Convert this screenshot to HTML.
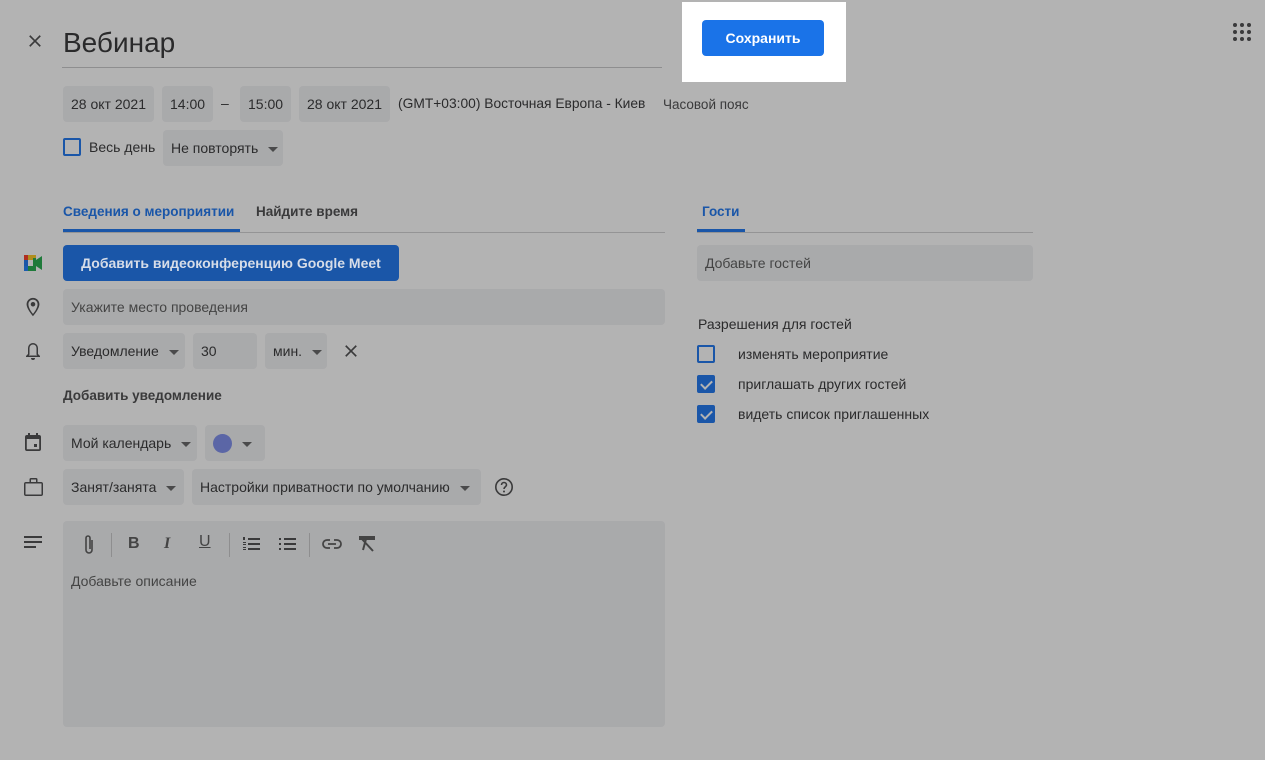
<!DOCTYPE html>
<html><head><meta charset="utf-8"><style>
*{margin:0;padding:0;box-sizing:border-box}
body{width:1265px;height:760px;background:#b3b3b3;font-family:"Liberation Sans",Arial,sans-serif;color:#2b2b2c;position:relative;overflow:hidden;font-size:14px}
.a{position:absolute}
.f{position:absolute;background:#a9aaab;border-radius:4px;display:flex;align-items:center;padding-left:8px;font-size:14px;color:#2b2b2c}
.dd::after{content:"";border:5px solid transparent;border-top-color:#4a4a4b;border-bottom:0;margin-left:10px;margin-top:2px}
.cb{position:absolute;width:18px;height:18px;border:2px solid #1a56a8;border-radius:2px}
.cbx{background:#1a56a8}
.cbx::after{content:"";position:absolute;left:4px;top:1px;width:5px;height:9px;border:solid #b3b3b3;border-width:0 2px 2px 0;transform:rotate(45deg)}
.ic{position:absolute;fill:#3a3a3b}
</style></head><body>
<svg class="ic" style="left:25px;top:31px" width="20" height="20" viewBox="0 0 24 24"><path d="M19 6.4L17.6 5 12 10.6 6.4 5 5 6.4 10.6 12 5 17.6 6.4 19 12 13.4 17.6 19 19 17.6 13.4 12z"/></svg>
<div class="a" style="left:63px;top:27px;font-size:28px;color:#2a2a2b">Вебинар</div>
<div class="a" style="left:62px;top:67px;width:600px;height:1px;background:#8e8e8f"></div>
<div class="a" style="left:682px;top:2px;width:164px;height:80px;background:#fff"></div>
<div class="a" style="left:702px;top:20px;width:122px;height:36px;background:#1a73e8;border-radius:4px;color:#fff;font-weight:bold;font-size:14px;text-align:center;line-height:36px">Сохранить</div>
<svg class="ic" style="left:1232px;top:22px" width="20" height="20" viewBox="0 0 20 20"><g fill="#3a3a3b"><circle cx="3" cy="3" r="2"/><circle cx="10" cy="3" r="2"/><circle cx="17" cy="3" r="2"/><circle cx="3" cy="10" r="2"/><circle cx="10" cy="10" r="2"/><circle cx="17" cy="10" r="2"/><circle cx="3" cy="17" r="2"/><circle cx="10" cy="17" r="2"/><circle cx="17" cy="17" r="2"/></g></svg>

<div class="f" style="left:63px;top:86px;width:91px;height:36px">28 окт 2021</div>
<div class="f" style="left:162px;top:86px;width:51px;height:36px">14:00</div>
<div class="a" style="left:221px;top:95px">–</div>
<div class="f" style="left:240px;top:86px;width:51px;height:36px">15:00</div>
<div class="f" style="left:299px;top:86px;width:91px;height:36px">28 окт 2021</div>
<div class="a" style="left:398px;top:96px;font-size:13.8px">(GMT+03:00) Восточная Европа - Киев</div>
<div class="a" style="left:663px;top:97px;font-size:13.5px;color:#3a3a3b">Часовой пояс</div>

<div class="cb" style="left:63px;top:138px"></div>
<div class="a" style="left:89px;top:139px">Весь день</div>
<div class="f dd" style="left:163px;top:130px;width:120px;height:36px">Не повторять</div>

<div class="a" style="left:63px;top:204px;color:#1a56a8;font-weight:bold;font-size:13.5px">Сведения о мероприятии</div>
<div class="a" style="left:256px;top:204px;color:#3a3a3b;font-weight:bold;font-size:13.5px">Найдите время</div>
<div class="a" style="left:63px;top:232px;width:602px;height:1px;background:#949495"></div>
<div class="a" style="left:63px;top:229px;width:177px;height:3px;background:#1a56a8"></div>

<div class="a" style="left:702px;top:204px;color:#1a56a8;font-weight:bold;font-size:13.5px">Гости</div>
<div class="a" style="left:697px;top:232px;width:336px;height:1px;background:#949495"></div>
<div class="a" style="left:697px;top:229px;width:48px;height:3px;background:#1a56a8"></div>
<div class="f" style="left:697px;top:245px;width:336px;height:36px;color:#444">Добавьте гостей</div>
<div class="a" style="left:698px;top:316px">Разрешения для гостей</div>
<div class="cb" style="left:697px;top:345px"></div><div class="a" style="left:738px;top:346px">изменять мероприятие</div>
<div class="cb cbx" style="left:697px;top:375px"></div><div class="a" style="left:738px;top:376px">приглашать других гостей</div>
<div class="cb cbx" style="left:697px;top:405px"></div><div class="a" style="left:738px;top:406px">видеть список приглашенных</div>

<svg class="a" style="left:24px;top:255px" width="19" height="16" viewBox="0 0 19 16"><rect x="0" y="0" width="12" height="5" fill="#b08e1e"/><rect x="0" y="0" width="4" height="5" fill="#b02e20"/><rect x="0" y="5" width="4" height="6" fill="#1a56a8"/><rect x="0" y="11" width="12" height="5" fill="#1f7a3a"/><rect x="0" y="11" width="4" height="5" fill="#1a5cae"/><rect x="9" y="3" width="3" height="10" fill="#1f7a3a"/><path d="M12 5l6-4v14l-6-4z" fill="#1f7a3a"/></svg>
<div class="a" style="left:63px;top:245px;width:336px;height:36px;background:#1a56a8;border-radius:4px;color:#d7dde8;font-weight:bold;font-size:14px;text-align:center;line-height:36px">Добавить видеоконференцию Google Meet</div>

<svg class="ic" style="left:22px;top:296px" width="22" height="22" viewBox="0 0 24 24"><path d="M12 2C8.1 2 5 5.1 5 9c0 5.2 7 13 7 13s7-7.8 7-13c0-3.9-3.1-7-7-7zm0 17.5C9.9 17 7 12.7 7 9c0-2.8 2.2-5 5-5s5 2.2 5 5c0 3.6-2.9 8-5 10.5zM12 6.5a2.5 2.5 0 100 5 2.5 2.5 0 000-5z"/></svg>
<div class="f" style="left:63px;top:289px;width:602px;height:36px;color:#444">Укажите место проведения</div>

<svg class="ic" style="left:24px;top:341px" width="18" height="20" viewBox="0 0 18 20"><path d="M9 2a5 5 0 015 5v6l2 2v1H2v-1l2-2V7a5 5 0 015-5zm0 1.5A3.5 3.5 0 005.5 7v6.6L4.8 14.5h8.4l-.7-.9V7A3.5 3.5 0 009 3.5zM7 17h4a2 2 0 01-4 0z"/></svg>
<div class="f dd" style="left:63px;top:333px;width:122px;height:36px">Уведомление</div>
<div class="f" style="left:193px;top:333px;width:64px;height:36px">30</div>
<div class="f dd" style="left:265px;top:333px;width:62px;height:36px">мин.</div>
<svg class="ic" style="left:341px;top:341px" width="20" height="20" viewBox="0 0 24 24"><path d="M19 6.4L17.6 5 12 10.6 6.4 5 5 6.4 10.6 12 5 17.6 6.4 19 12 13.4 17.6 19 19 17.6 13.4 12z"/></svg>
<div class="a" style="left:63px;top:388px;font-weight:bold;font-size:13.5px;color:#3a3a3b">Добавить уведомление</div>

<svg class="ic" style="left:25px;top:433px" width="16" height="18" viewBox="0 0 16 18"><path d="M3 0h2v2h6V0h2v2h1a2 2 0 012 2v12a2 2 0 01-2 2H2a2 2 0 01-2-2V4a2 2 0 012-2h1zM1.8 6v10.2h12.4V6zm7.2 5h3v3H9z"/></svg>
<div class="f dd" style="left:63px;top:425px;width:134px;height:36px">Мой календарь</div>
<div class="f dd" style="left:205px;top:425px;width:60px;height:36px"><span style="width:19px;height:19px;border-radius:50%;background:#5b66a6;display:inline-block"></span></div>

<svg class="ic" style="left:24px;top:478px" width="19" height="18" viewBox="0 0 19 18"><path d="M7 0h5a1.5 1.5 0 011.5 1.5V4H17a2 2 0 012 2v10a2 2 0 01-2 2H2a2 2 0 01-2-2V6a2 2 0 012-2h3.5V1.5A1.5 1.5 0 017 0zm0 1.5V4h5V1.5zM1.5 5.5v11h16v-11z"/></svg>
<div class="f dd" style="left:63px;top:469px;width:121px;height:36px">Занят/занята</div>
<div class="f dd" style="left:192px;top:469px;width:289px;height:36px">Настройки приватности по умолчанию</div>
<svg class="a" style="left:494px;top:477px" width="20" height="20" viewBox="0 0 20 20"><circle cx="10" cy="10" r="8.2" fill="none" stroke="#3a3a3b" stroke-width="1.6"/><path d="M7.5 8a2.5 2.5 0 115 0c0 1.8-2.5 1.8-2.5 4" fill="none" stroke="#3a3a3b" stroke-width="1.6"/><circle cx="10" cy="14.5" r="1" fill="#3a3a3b"/></svg>

<svg class="ic" style="left:24px;top:536px" width="18" height="12" viewBox="0 0 18 12"><rect y="0" width="18" height="2"/><rect y="5" width="18" height="2"/><rect y="10" width="12" height="2"/></svg>
<div class="a" style="left:63px;top:521px;width:602px;height:206px;background:#a9aaab;border-radius:4px"></div>
<svg class="a" style="left:82px;top:534px" width="14" height="22" viewBox="0 0 14 22"><path d="M10 6v10a3 3 0 01-6 0V4a2 2 0 014 0v11" fill="none" stroke="#444" stroke-width="1.6"/></svg>
<div class="a" style="left:111px;top:533px;width:1px;height:24px;background:#8e8e8f"></div>
<div class="a" style="left:128px;top:535px;font-weight:bold;font-size:16px;color:#444">B</div>
<div class="a" style="left:164px;top:535px;font-weight:bold;font-style:italic;font-size:16px;color:#444;font-family:'Liberation Serif',serif">I</div>
<div class="a" style="left:199px;top:533px;font-size:16px;color:#444;text-decoration:underline">U</div>
<div class="a" style="left:229px;top:533px;width:1px;height:24px;background:#8e8e8f"></div>
<svg class="ic" style="left:243px;top:537px" width="17" height="14" viewBox="0 0 17 14"><rect x="5" y="1" width="12" height="2"/><rect x="5" y="6" width="12" height="2"/><rect x="5" y="11" width="12" height="2"/><rect x="0" y="0" width="2" height="3"/><rect x="0" y="5" width="3" height="1"/><rect x="0" y="7" width="3" height="1"/><rect x="0" y="10" width="3" height="1"/><rect x="0" y="12" width="3" height="1"/></svg>
<svg class="ic" style="left:279px;top:537px" width="17" height="14" viewBox="0 0 17 14"><rect x="5" y="1" width="12" height="2"/><rect x="5" y="6" width="12" height="2"/><rect x="5" y="11" width="12" height="2"/><rect x="0" y="1" width="2" height="2"/><rect x="0" y="6" width="2" height="2"/><rect x="0" y="11" width="2" height="2"/></svg>
<div class="a" style="left:309px;top:533px;width:1px;height:24px;background:#8e8e8f"></div>
<svg class="a" style="left:322px;top:538px" width="20" height="12" viewBox="0 0 20 12"><path d="M8 2H5a4 4 0 000 8h3M12 2h3a4 4 0 010 8h-3M6 6h8" fill="none" stroke="#444" stroke-width="1.8"/></svg>
<svg class="a" style="left:358px;top:535px" width="18" height="18" viewBox="0 0 18 18"><path d="M2 2h14v2H2zM8 4l-3 11M3 3l12 13" fill="none" stroke="#444" stroke-width="2"/></svg>
<div class="a" style="left:71px;top:573px;color:#444">Добавьте описание</div>
</body></html>
